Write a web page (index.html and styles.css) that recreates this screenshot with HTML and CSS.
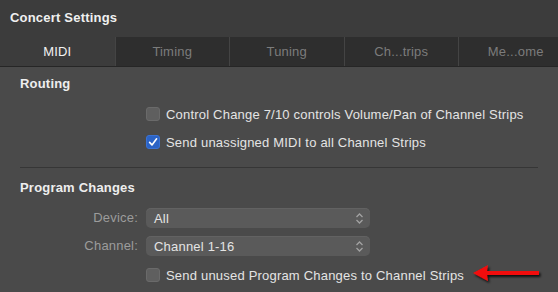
FILE: index.html
```html
<!DOCTYPE html>
<html lang="en">
<head>
    <meta charset="UTF-8" />
    <title>Concert Settings</title>
    <link rel="stylesheet" href="styles.css">
</head>
<body>
    <div class="header">Concert Settings</div>
    <div class="tabs">
        <div class="tab active">MIDI</div>
        <div class="tab">Timing</div>
        <div class="tab">Tuning</div>
        <div class="tab">Ch...trips</div>
        <div class="tab">Me...ome</div>
    </div>
    <div class="content">
        <div class="section routing">
            <h3>Routing</h3>
            <div class="grid">
                <div></div>
                <label class="check"><span class="box"></span>Control Change 7/10 controls Volume/Pan of Channel Strips</label>
                <div></div>
                <label class="check"><span class="box checked"><svg width="10" height="10" viewBox="0 0 10 10"><path d="M1.6 5.4 L4 7.9 L8.6 1.8" fill="none" stroke="#fff" stroke-width="1.6" stroke-linecap="round" stroke-linejoin="round"/></svg></span>Send unassigned MIDI to all Channel Strips</label>
            </div>
        </div>
        <div class="divider"></div>
        <div class="section programs">
            <h3>Program Changes</h3>
            <div class="grid">
                <div class="label">Device:</div>
                <div class="popup"><span>All</span><svg class="chev" width="9" height="13" viewBox="0 0 9 13"><path d="M1.5 5 L4.5 2 L7.5 5 M1.5 8 L4.5 11 L7.5 8" fill="none" stroke="#a2a2a2" stroke-width="1.3"/></svg></div>
                <div class="label">Channel:</div>
                <div class="popup"><span>Channel 1-16</span><svg class="chev" width="9" height="13" viewBox="0 0 9 13"><path d="M1.5 5 L4.5 2 L7.5 5 M1.5 8 L4.5 11 L7.5 8" fill="none" stroke="#a2a2a2" stroke-width="1.3"/></svg></div>
                <div></div>
                <div class="check-row">
                    <label class="check"><span class="box"></span>Send unused Program Changes to Channel Strips</label>
                    <svg class="arrow" width="72" height="22" viewBox="0 0 72 22">
                        <defs>
                            <filter id="shade" x="-10%" y="-30%" width="130%" height="180%">
                                <feDropShadow dx="1.5" dy="2" stdDeviation="1.2" flood-color="#000" flood-opacity="0.8"/>
                            </filter>
                        </defs>
                        <path d="M1 9 L16 1 L15 7 L67 7 L67 11 L15 11 L16 17 Z" fill="#f20c0c" filter="url(#shade)"/>
                    </svg>
                </div>
            </div>
        </div>
    </div>
</body>
</html>
```

FILE: styles.css
```css
body {
    margin: 0;
    width: 558px;
    height: 292px;
    overflow: hidden;
    background: #4a4a4a;
    font-family: 'Liberation Sans', Arial, sans-serif;
    font-size: 13px;
    letter-spacing: 0.2px;
    color: #e4e4e4;
}
.header {
    height: 37px;
    box-sizing: border-box;
    padding: 10px 0 0 10px;
    background: #3c3c3c;
    color: #f0f0f0;
    font-weight: 700;
    line-height: 16px;
}
.tabs {
    display: flex;
    height: 29px;
    background: #2e2e2e;
    border-bottom: 1px solid #262626;
}
.tab {
    width: 114.5px;
    flex: none;
    display: flex;
    align-items: center;
    justify-content: center;
    color: #7c7c7c;
    border-left: 1px solid #444;
    box-sizing: border-box;
    padding-bottom: 1px;
}
.tab:first-child {
    border-left: none;
}
.tab.active {
    background: #3c3c3c;
    color: #f2f2f2;
}
.content {
    padding: 0 20px;
}
.section h3 {
    margin: 0;
    font-size: 13px;
    font-weight: 700;
    line-height: 16px;
    color: #eeeeee;
}
.routing {
    padding-top: 9px;
    padding-bottom: 15px;
}
.programs {
    padding-top: 12px;
}
.grid {
    display: grid;
    grid-template-columns: 118px 1fr;
    column-gap: 8px;
    row-gap: 8px;
    grid-auto-rows: 20px;
}
.routing .grid {
    margin-top: 12px;
}
.programs .grid {
    margin-top: 12px;
}
.divider {
    height: 1px;
    background: #363636;
}
.label {
    text-align: right;
    color: #9c9c9c;
    line-height: 20px;
}
.check {
    display: flex;
    align-items: center;
    gap: 6px;
    white-space: nowrap;
}
.box {
    width: 14px;
    height: 14px;
    box-sizing: border-box;
    border-radius: 3px;
    background: #5f5f5f;
    border: 1px solid #6a6a6a;
    display: flex;
    align-items: center;
    justify-content: center;
    flex: none;
}
.box.checked {
    background: #2b63c5;
    border-color: #3a72d4;
}
.popup {
    width: 224px;
    height: 20px;
    box-sizing: border-box;
    border-radius: 5px;
    background: #5a5a5a;
    box-shadow: inset 0 1px 0 #626262;
    display: flex;
    align-items: center;
    justify-content: space-between;
    padding: 0 6px 0 8px;
}
.check-row {
    display: flex;
    align-items: center;
    margin-top: 2px;
}
.arrow {
    margin-left: 8px;
    flex: none;
}
```
